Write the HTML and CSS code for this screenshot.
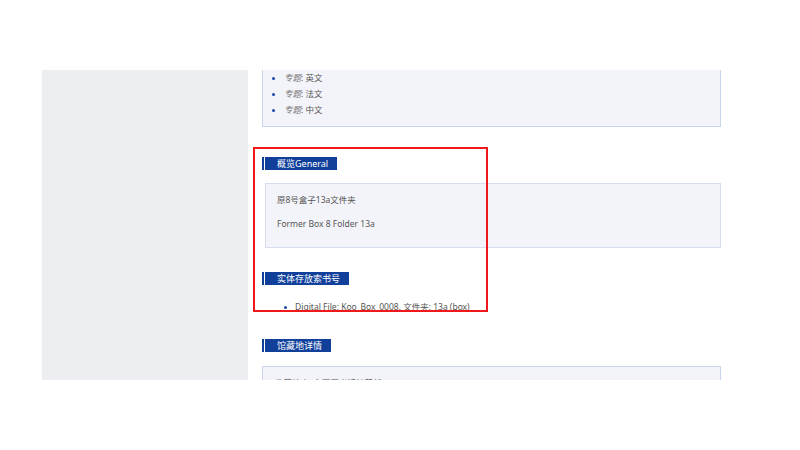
FILE: index.html
```html
<!DOCTYPE html>
<html lang="zh-CN">
<head>
	<meta charset="UTF-8">
	<title>文件夹详情</title>
	<link rel="stylesheet" href="styles.css">
</head>
<body>
<div class="frame">
	<div class="side"></div>
	<div class="main">
		<div class="box box-cut">
			<ul class="dots">
				<li><em>专题</em>: 英文</li>
				<li><em>专题</em>: 法文</li>
				<li><em>专题</em>: 中文</li>
			</ul>
		</div>

		<div class="title"><span>概览General</span></div>
		<div class="box box-in">
			<p>原8号盒子13a文件夹</p>
			<p>Former Box 8 Folder 13a</p>
		</div>

		<div class="title t2"><span>实体存放索书号</span></div>
		<ul class="dots plain">
			<li>Digital File: Koo_Box_0008, 文件夹: 13a (box)</li>
		</ul>

		<div class="title t3"><span>馆藏地详情</span></div>
		<div class="box box-last">
			<p>收藏地点: 东亚图书馆特藏部</p>
		</div>
	</div>
</div>
<div class="mark"></div>
</body>
</html>
```

FILE: styles.css
```css
body{
	margin: 0;
	background: #fff;
	font-family: "Noto Sans", "Noto Sans CJK SC", sans-serif;
	font-size: 8.5px;
	color: #555;
}
.frame{
	width: 679px;
	height: 310px;
	margin: 70px 0 0 42px;
	display: flex;
	overflow: hidden;
}
.side{
	width: 206px;
	flex: none;
	background: #edeef1;
}
.main{
	flex: 1;
	padding-left: 14px;
}
.box{
	background: #f3f4f9;
	border: 1px solid #d6ddee;
}
.box-cut{
	border-top: 0;
	border-color: #c9d5ea;
	padding: 0 0 8px 9px;
}
.dots{
	list-style: none;
	margin: 0;
	padding: 0;
}
.dots li{
	display: flex;
	align-items: center;
	line-height: 16px;
	height: 16px;
}
.dots li::before{
	content: "";
	width: 3px;
	height: 3px;
	border-radius: 50%;
	background: #1a45a8;
	margin-right: 9px;
}
.dots em{
	font-style: italic;
	color: #777;
}
.plain{
	margin-top: 14px;
	padding-left: 22px;
}
.plain li::before{
	margin-right: 8px;
}
.title{
	margin-top: 30px;
	height: 13px;
	border-left: 2px solid #11409b;
	padding-left: 1px;
	display: flex;
}
.title span{
	background: #11409b;
	color: #fff;
	font-size: 9px;
	line-height: 13px;
	padding: 0 9px 0 12px;
}
.t2{
	margin-top: 24px;
}
.t3{
	margin-top: 24px;
}
.box-in{
	margin: 13px 0 0 3px;
	padding: 10px 11px 17px;
}
.box p{
	margin: 0 0 12px;
	line-height: 12px;
}
.box-in p:last-child{
	margin-bottom: 0;
}
.box-last{
	margin-top: 14px;
	padding: 10px 12px;
	border-color: #c9d5ea;
}
.mark{
	position: absolute;
	left: 253px;
	top: 147px;
	width: 231px;
	height: 161px;
	border: 2px solid #f01818;
}
```
